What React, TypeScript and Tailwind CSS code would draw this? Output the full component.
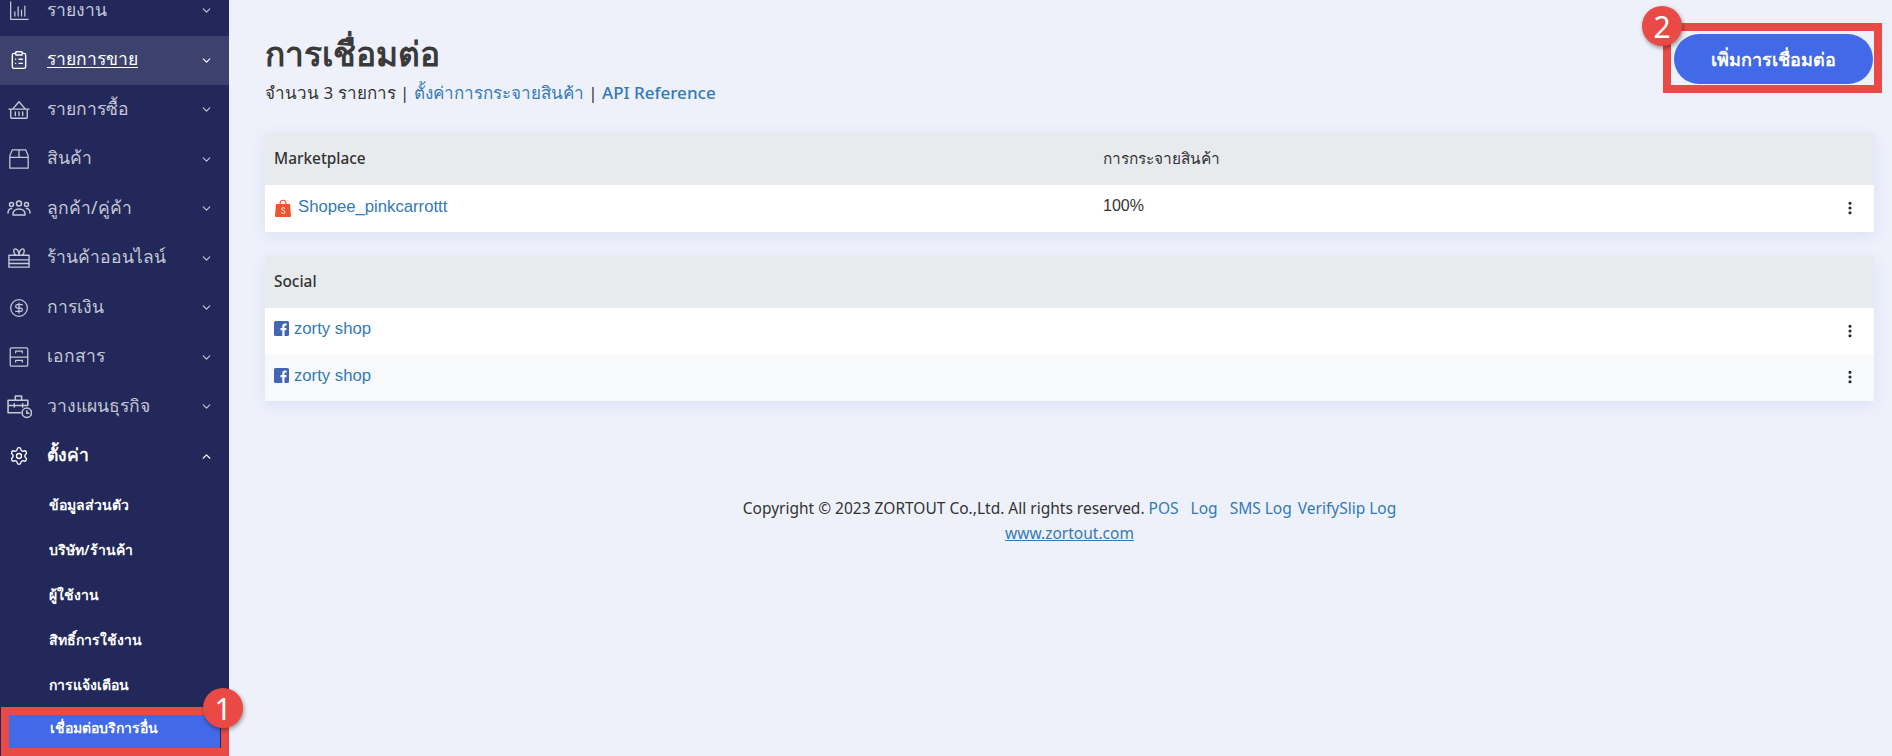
import { ChevronDown, ChevronUp, ClipboardList, Settings, CircleDollarSign, MoreVertical } from 'lucide-react';
import type { ReactNode } from 'react';

const ic = { width: 20, height: 20, viewBox: '0 0 24 24', fill: 'none', stroke: 'currentColor', strokeWidth: 1.5, strokeLinecap: 'round' as const, strokeLinejoin: 'round' as const };

const ReportIcon = () => (
  <svg {...ic}><path d="M2 1v21h21M7 18v-5M11 18V7M15 18v-7M19 18V6" /></svg>
);
const BasketIcon = () => (
  <svg {...ic} width={22} height={22}><path d="M1 11h22M3 11v9a1 1 0 0 0 1 1h16a1 1 0 0 0 1-1v-9M5 11l7-8 7 8M8 14v4M12 14v4M16 14v4" /></svg>
);
const BoxIcon = () => (
  <svg {...ic}><path d="M1 8l3-7h16l3 7v15H1zM1 10h22M12 1v9" /></svg>
);
const PeopleIcon = () => (
  <svg {...ic} width={24} height={24}>
    <circle cx="4.500" cy="7.500" r="2" /><circle cx="12" cy="6.500" r="2.500" /><circle cx="19.500" cy="7.500" r="2" />
    <path d="M1 16c0-2.500 1.500-4.500 3.500-4.500M23 16c0-2.500-1.500-4.500-3.500-4.500M6 18v-1c0-3 2.500-5 6-5s6 2 6 5v1z" />
  </svg>
);
const GiftIcon = () => (
  <svg {...ic} width={22} height={22}><path d="M1 9h22v13H1zM1 14h22M1 18h22M9 9c-4-2-3-7-1-7s4 3 4 7c0-4 2-7 4-7s3 5-1 7" /></svg>
);
const CabinetIcon = () => (
  <svg {...ic}><rect x="1.500" y="1" width="21" height="22" rx="1.500" /><path d="M1.500 12h21M8 7V5h8v2M8 18v-2h8v2" /></svg>
);
const PlanIcon = () => (
  <svg {...ic} width={25} height={25}>
    <path d="M13 18H1V6h19v5M1 11h18M8 6V2h6v4M7 9.500v3M15 9.500v3" />
    <circle cx="19" cy="18" r="4.500" /><path d="M19 16v2.500h2" />
  </svg>
);

function MenuRow({ icon, label, active, bold, open }: { icon: ReactNode; label: string; active?: boolean; bold?: boolean; open?: boolean }) {
  return (
    <div className={`flex h-[49.500px] shrink-0 items-center pr-[16px] ${active ? 'bg-[#3c416e] text-white' : 'text-[#c6c9d8]'} ${bold ? 'text-white' : ''}`}>
      <span className="flex w-[38px] justify-center">{icon}</span>
      <span className={`ml-[9px] flex-1 -translate-y-[2px] text-[17.500px] ${active ? 'underline underline-offset-2' : ''} ${bold ? 'font-bold' : ''}`}>{label}</span>
      {open ? <ChevronUp size={13} strokeWidth={2.500} /> : <ChevronDown size={13} strokeWidth={2} />}
    </div>
  );
}

function SubRow({ label, active }: { label: string; active?: boolean }) {
  return (
    <div className={`flex shrink-0 items-center text-[14px] font-semibold text-white ${active ? 'mx-[9px] mt-[8px] h-[33px] bg-[#4169e8] pb-[8px] pl-[41px]' : 'h-[45px] pl-[49px]'}`}>
      {label}
    </div>
  );
}

function ShopeeIcon() {
  return (
    <svg width="16" height="18" viewBox="0 0 16 18" className="mr-[7px] ml-[1px] inline-block translate-y-[2px]">
      <path d="M5 5c0-5 6-5 6 0" fill="none" stroke="#f0532d" strokeWidth="1.200" />
      <path d="M1 5h14l1 12a1 1 0 0 1-1 1H1a1 1 0 0 1-1-1z" fill="#f0532d" />
      <path d="M10 9.500c-1-1-3.500-1-3.500.5s3.500 1 3.500 3-3 1.500-4 .5" fill="none" stroke="#fff" strokeWidth=".9" />
    </svg>
  );
}

function FbIcon() {
  return (
    <svg width="15" height="15" viewBox="0 0 15 15" className="mr-[5px] inline-block">
      <rect width="15" height="15" rx="1.500" fill="#4267b2" />
      <path d="M10.500 15V9.200h1.800l.3-2.200h-2.100V5.700c0-.7.2-1.100 1.100-1.100h1.100V2.700c-.5-.1-1-.1-1.600-.1-1.700 0-2.800 1-2.800 2.800V7H6.500v2.200h1.800V15z" fill="#fff" />
    </svg>
  );
}

function Row({ name, icon, pct, alt }: { name: string; icon: ReactNode; pct?: string; alt?: boolean }) {
  return (
    <div className={`flex h-[46.500px] items-center pl-[9px] pr-[16px] font-['Liberation_Sans',sans-serif] ${alt ? 'bg-[#f7f9fb]' : 'bg-white'}`}>
      <span className="flex w-[829px] -translate-y-[2px] items-center text-[16.700px] text-[#337ab7]">{icon}{name}</span>
      <span className="flex-1 -translate-y-[2px] text-[16px] text-[#333]">{pct}</span>
      <MoreVertical size={16} strokeWidth={2.600} className="text-[#222]" />
    </div>
  );
}

export default function App() {
  return (
    <div className="relative flex h-[756px] w-[1892px] overflow-hidden bg-[#eef1fa] font-['Noto_Sans',sans-serif] text-[#333]">
      {/* Sidebar */}
      <aside className="flex h-[756px] w-[229px] shrink-0 flex-col overflow-hidden bg-[#222859]">
        <div className="-mt-[14px] flex flex-col">
          <MenuRow icon={<ReportIcon />} label="รายงาน" />
          <MenuRow icon={<ClipboardList size={20} strokeWidth={1.700} />} label="รายการขาย" active />
          <MenuRow icon={<BasketIcon />} label="รายการซื้อ" />
          <MenuRow icon={<BoxIcon />} label="สินค้า" />
          <MenuRow icon={<PeopleIcon />} label="ลูกค้า/คู่ค้า" />
          <MenuRow icon={<GiftIcon />} label="ร้านค้าออนไลน์" />
          <MenuRow icon={<CircleDollarSign size={20} strokeWidth={1.500} />} label="การเงิน" />
          <MenuRow icon={<CabinetIcon />} label="เอกสาร" />
          <MenuRow icon={<PlanIcon />} label="วางแผนธุรกิจ" />
          <MenuRow icon={<Settings size={20} strokeWidth={1.600} />} label="ตั้งค่า" bold open />
          <div className="mt-[1px] flex flex-col">
            <SubRow label="ข้อมูลส่วนตัว" />
            <SubRow label="บริษัท/ร้านค้า" />
            <SubRow label="ผู้ใช้งาน" />
            <SubRow label="สิทธิ์การใช้งาน" />
            <SubRow label="การแจ้งเตือน" />
            <SubRow label="เชื่อมต่อบริการอื่น" active />
          </div>
        </div>
      </aside>

      {/* Main */}
      <main className="flex min-w-0 flex-1 flex-col pl-[36px] pr-[18px]">
        <header className="flex h-[133px] shrink-0 items-start justify-between">
          <div>
            <h1 className="mt-[28px] text-[33.500px] leading-[50px] font-semibold text-[#3a3a3a]">การเชื่อมต่อ</h1>
            <p className="mt-[3px] text-[17px] leading-[24px] text-[#333]">
              จำนวน 3 รายการ | <span className="text-[#337ab7]">ตั้งค่าการกระจายสินค้า</span> | <span className="font-medium text-[#337ab7]">API Reference</span>
            </p>
          </div>
          <button className="mt-[34px] mr-[1px] h-[50px] w-[199px] rounded-full bg-[#4169e8] text-[18px] font-semibold text-white">เพิ่มการเชื่อมต่อ</button>
        </header>

        <section className="shadow-[0_4px_14px_rgba(90,110,230,0.12)]">
          <div className="flex h-[52px] items-center bg-[#e8ebee] pl-[9px] text-[15.400px] font-medium text-[#333]">
            <span className="w-[829px]">Marketplace</span>
            <span>การกระจายสินค้า</span>
          </div>
          <Row name="Shopee_pinkcarrottt" icon={<ShopeeIcon />} pct="100%" />
        </section>

        <section className="mt-[24px] shadow-[0_4px_14px_rgba(90,110,230,0.12)]">
          <div className="flex h-[52px] items-center bg-[#e8ebee] pl-[9px] text-[15.400px] font-medium text-[#333]">Social</div>
          <Row name="zorty shop" icon={<FbIcon />} />
          <Row name="zorty shop" icon={<FbIcon />} alt />
        </section>

        <footer className="mt-[95px] text-center text-[15.500px] leading-[25px] text-[#333]">
          <div>
            Copyright © 2023 ZORTOUT Co.,Ltd. All rights reserved. <span className="text-[#337ab7]">POS</span>
            <span className="ml-[12px] text-[#337ab7]">Log</span>
            <span className="ml-[12px] text-[#337ab7]">SMS Log</span>
            <span className="ml-[6px] text-[#337ab7]">VerifySlip Log</span>
          </div>
          <div className="text-[#337ab7] underline">www.zortout.com</div>
        </footer>
      </main>

      {/* Annotations */}
      <div className="pointer-events-none absolute left-[1px] top-[707px] h-[49px] w-[228px] border-[8px] border-[#ea4a45]" />
      <div className="absolute left-[203px] top-[688px] flex h-[40px] w-[40px] items-center justify-center rounded-full bg-[#ea4a45] text-[30px] text-white shadow-[1px_2px_4px_rgba(0,0,0,0.4)]">1</div>
      <div className="pointer-events-none absolute left-[1663px] top-[23px] h-[70px] w-[219px] border-[8px] border-[#ea4a45]" />
      <div className="absolute left-[1642px] top-[6px] flex h-[40px] w-[40px] items-center justify-center rounded-full bg-[#ea4a45] text-[30px] text-white shadow-[1px_2px_4px_rgba(0,0,0,0.4)]">2</div>
    </div>
  );
}
